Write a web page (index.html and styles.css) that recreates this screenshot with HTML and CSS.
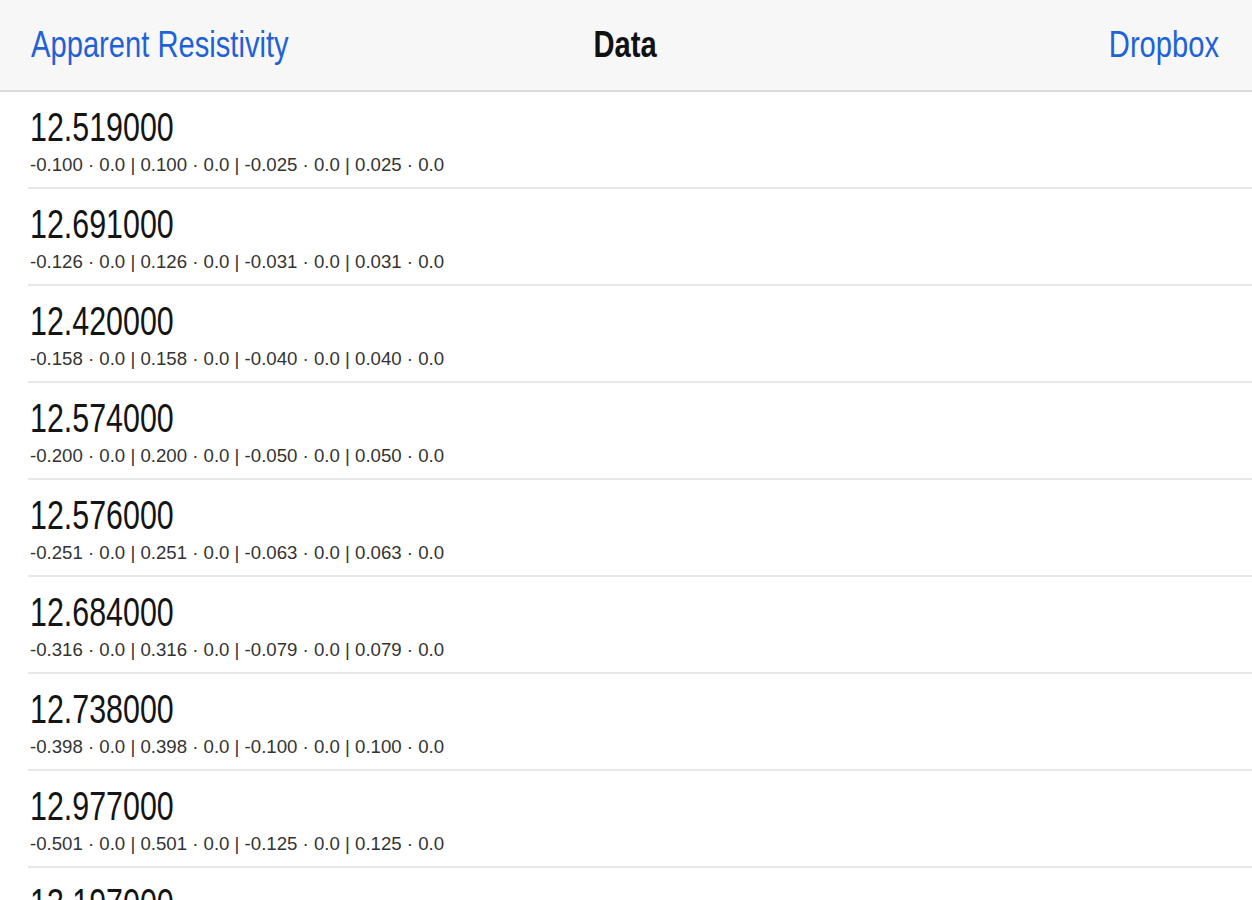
FILE: index.html
```html
<!DOCTYPE html>
<html lang="en">
<head>
<meta charset="utf-8">
<title>Data</title>
<link rel="stylesheet" href="styles.css">
</head>
<body>
<div class="app">
  <header class="navbar">
    <a class="nav-btn nav-left"><span class="squish squish-left">Apparent Resistivity</span></a>
    <h1 class="nav-title"><span class="squish squish-center">Data</span></h1>
    <a class="nav-btn nav-right"><span class="squish squish-right">Dropbox</span></a>
  </header>
  <ul class="list">
    <li class="row"><div class="row-inner"><span class="value">12.519000</span><span class="detail">-0.100 · 0.0 | 0.100 · 0.0 | -0.025 · 0.0 | 0.025 · 0.0</span></div></li>
    <li class="row"><div class="row-inner"><span class="value">12.691000</span><span class="detail">-0.126 · 0.0 | 0.126 · 0.0 | -0.031 · 0.0 | 0.031 · 0.0</span></div></li>
    <li class="row"><div class="row-inner"><span class="value">12.420000</span><span class="detail">-0.158 · 0.0 | 0.158 · 0.0 | -0.040 · 0.0 | 0.040 · 0.0</span></div></li>
    <li class="row"><div class="row-inner"><span class="value">12.574000</span><span class="detail">-0.200 · 0.0 | 0.200 · 0.0 | -0.050 · 0.0 | 0.050 · 0.0</span></div></li>
    <li class="row"><div class="row-inner"><span class="value">12.576000</span><span class="detail">-0.251 · 0.0 | 0.251 · 0.0 | -0.063 · 0.0 | 0.063 · 0.0</span></div></li>
    <li class="row"><div class="row-inner"><span class="value">12.684000</span><span class="detail">-0.316 · 0.0 | 0.316 · 0.0 | -0.079 · 0.0 | 0.079 · 0.0</span></div></li>
    <li class="row"><div class="row-inner"><span class="value">12.738000</span><span class="detail">-0.398 · 0.0 | 0.398 · 0.0 | -0.100 · 0.0 | 0.100 · 0.0</span></div></li>
    <li class="row"><div class="row-inner"><span class="value">12.977000</span><span class="detail">-0.501 · 0.0 | 0.501 · 0.0 | -0.125 · 0.0 | 0.125 · 0.0</span></div></li>
    <li class="row"><div class="row-inner"><span class="value">13.197000</span><span class="detail">-0.631 · 0.0 | 0.631 · 0.0 | -0.158 · 0.0 | 0.158 · 0.0</span></div></li>
  </ul>
</div>
</body>
</html>
```

FILE: styles.css
```css
html, body {
  margin: 0;
  padding: 0;
  background: #ffffff;
  height: 100%;
  overflow: hidden;
}

.app {
  font-family: "Liberation Sans", Arial, sans-serif;
  width: 1252px;
  height: 900px;
  overflow: hidden;
}

.navbar {
  height: 90px;
  background: #f7f7f7;
  border-bottom: 2px solid #dadada;
  display: grid;
  grid-template-columns: 1fr auto 1fr;
  align-items: center;
  padding: 0 33px 0 31px;
}

.nav-btn {
  font-size: 36px;
  color: #1f62d8;
  line-height: 40px;
  white-space: nowrap;
}

.nav-left { justify-self: start; }
.nav-right { justify-self: end; }

.nav-title {
  margin: 0;
  font-size: 36px;
  font-weight: bold;
  color: #111111;
  line-height: 40px;
  justify-self: center;
}

.squish {
  display: inline-block;
  transform: scaleX(0.81);
}
.squish-left { transform-origin: left center; }
.squish-right { transform-origin: right center; }
.squish-center { transform-origin: center center; }

.list {
  list-style: none;
  margin: 0;
  padding: 0;
}

.row {
  padding-left: 28px;
}

.row-inner {
  box-sizing: border-box;
  height: 97px;
  border-bottom: 2px solid #e8e8e8;
  display: flex;
  flex-direction: column;
  padding-top: 12px;
  padding-left: 2px;
  gap: 4px;
}

.value {
  font-size: 40px;
  line-height: 46px;
  color: #141414;
  display: inline-block;
  transform: scaleX(0.76);
  transform-origin: left center;
  white-space: nowrap;
}

.detail {
  font-size: 19px;
  line-height: 22px;
  color: #333333;
  white-space: nowrap;
  display: inline-block;
  transform: scaleX(0.98);
  transform-origin: left center;
}
```
